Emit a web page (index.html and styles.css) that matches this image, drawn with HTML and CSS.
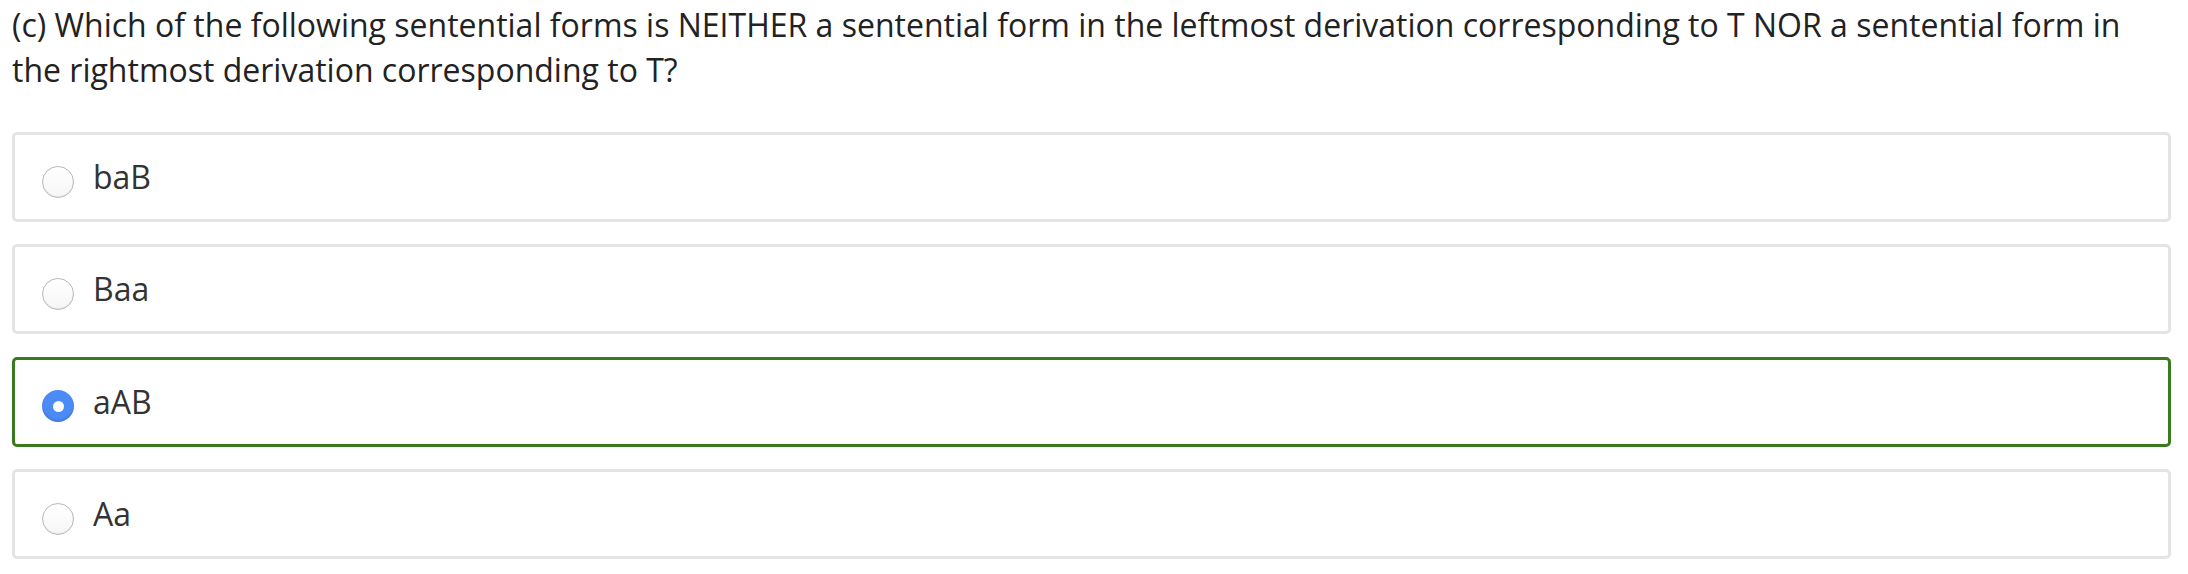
FILE: index.html
```html
<!DOCTYPE html>
<html>
<head>
<meta charset="utf-8">
<link rel="stylesheet" href="styles.css">
</head>
<body>
<div class="page">
  <p class="question">(c) Which of the following sentential forms is NEITHER a sentential form in the leftmost derivation corresponding to T NOR a sentential form in the rightmost derivation corresponding to T?</p>
  <div class="options">
    <label class="option"><input type="radio" name="q" class="radio"><span class="label">baB</span></label>
    <label class="option"><input type="radio" name="q" class="radio"><span class="label">Baa</span></label>
    <label class="option selected"><input type="radio" name="q" class="radio" checked><span class="label">aAB</span></label>
    <label class="option"><input type="radio" name="q" class="radio"><span class="label">Aa</span></label>
  </div>
</div>
</body>
</html>
```

FILE: styles.css
```css
html, body {
  margin: 0;
  padding: 0;
  background: #ffffff;
}

.page {
  padding: 2px 17px 0 12px;
  font-family: "Open Sans", "Liberation Sans", sans-serif;
  color: #222222;
}

.question {
  margin: 0;
  font-size: 32px;
  line-height: 45px;
}

.options {
  margin-top: 40px;
  display: flex;
  flex-direction: column;
  gap: 22.4px;
}

.option {
  box-sizing: border-box;
  height: 90px;
  display: flex;
  align-items: center;
  padding-left: 27px;
  border: 3px solid #e4e4e4;
  border-radius: 5px;
  background: #ffffff;
}

.option.selected {
  border-color: #3a7a1f;
}

.radio {
  appearance: none;
  -webkit-appearance: none;
  box-sizing: border-box;
  width: 32px;
  height: 32px;
  margin: 9px 19px 0 0;
  border-radius: 50%;
  border: 1px solid #b9b9b9;
  background: linear-gradient(#ffffff, #f6f6f6);
  box-shadow: inset 0 -1px 1px rgba(0, 0, 0, 0.06);
  flex: none;
  display: flex;
  align-items: center;
  justify-content: center;
}

.radio:checked {
  border: none;
  background: #4b8bf5;
  box-shadow: inset 0 -2px 2px rgba(0, 0, 0, 0.12);
}

.radio:checked::after {
  content: "";
  width: 11px;
  height: 11px;
  border-radius: 50%;
  background: #ffffff;
}

.label {
  font-size: 32px;
  line-height: 44px;
  color: #333333;
}
```
